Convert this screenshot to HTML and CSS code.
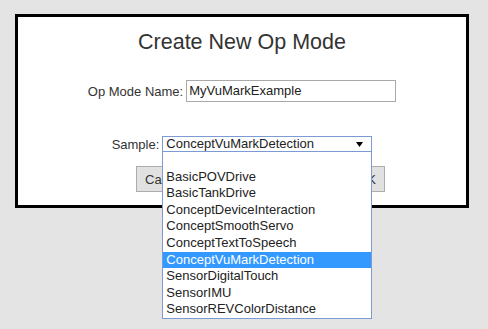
FILE: index.html
```html
<!DOCTYPE html>
<html lang="en">
<head>
  <meta charset="UTF-8">
  <title>Create New Op Mode</title>
  <link rel="stylesheet" href="styles.css">
</head>
<body>

<!-- New op mode dialog -->
<div class="dialog">
  <h1 class="title">Create New Op Mode</h1>

  <div class="row name-row">
    <label class="label">Op Mode Name:</label>
    <div class="input">MyVuMarkExample</div>
  </div>

  <div class="row sample-row">
    <label class="label">Sample:</label>
    <div class="select">
      <span class="select-text">ConceptVuMarkDetection</span>
      <svg class="arrow" width="7" height="5" viewBox="0 0 7 5"><polygon points="0,0 7,0 3.5,5" fill="#000"/></svg>

      <!-- open dropdown -->
      <ul class="options">
        <li></li>
        <li>BasicPOVDrive</li>
        <li>BasicTankDrive</li>
        <li>ConceptDeviceInteraction</li>
        <li>ConceptSmoothServo</li>
        <li>ConceptTextToSpeech</li>
        <li class="selected">ConceptVuMarkDetection</li>
        <li>SensorDigitalTouch</li>
        <li>SensorIMU</li>
        <li>SensorREVColorDistance</li>
      </ul>
    </div>
  </div>

  <div class="buttons">
    <button class="btn">Cancel</button>
    <button class="btn">OK</button>
  </div>
</div>

</body>
</html>
```

FILE: styles.css
```css
html {
  height: 100%;
}

body {
  margin: 0;
  min-height: 100%;
  padding-top: 14px;
  box-sizing: border-box;
  background: #e4e4e4;
  font-family: "Liberation Sans", Arial, sans-serif;
  color: #333;
}

.dialog {
  box-sizing: border-box;
  width: 454px;
  height: 194px;
  margin-left: 15px;
  padding-top: 13px;
  background: #fff;
  border: 3px solid #000;
}

.title {
  margin: 0;
  font-size: 21.5px;
  font-weight: normal;
  line-height: 24px;
  text-align: center;
  color: #333;
}

.row {
  display: flex;
  justify-content: center;
  align-items: center;
  font-size: 13px;
}

.name-row {
  margin-top: 26px;
  height: 22px;
  gap: 3px;
}

.sample-row {
  margin-top: 34px;
  height: 16px;
  gap: 3px;
}

.input {
  box-sizing: border-box;
  width: 210px;
  height: 22px;
  padding: 0 2px;
  line-height: 20px;
  border: 1px solid #a9a9a9;
  color: #222;
}

.select {
  position: relative;
  box-sizing: border-box;
  display: flex;
  align-items: center;
  width: 210px;
  height: 16px;
  padding-left: 3px;
  border: 1px solid #7a9cd3;
  line-height: 14px;
  color: #222;
}

.arrow {
  margin-left: auto;
  margin-right: 8px;
}

.options {
  position: absolute;
  top: 100%;
  left: -1px;
  z-index: 10;
  box-sizing: border-box;
  width: 210px;
  margin: 0;
  padding: 0;
  list-style: none;
  background: #fff;
  border: 1px solid #7a9cd3;
}

.options li {
  height: 16.6px;
  padding-left: 3px;
  line-height: 16.6px;
  white-space: nowrap;
  color: #222;
}

.options li.selected {
  background: #3399ff;
  color: #fff;
}

.buttons {
  display: flex;
  justify-content: space-between;
  margin-top: 14px;
  padding: 0 81px 0 118px;
}

.btn {
  height: 26px;
  padding: 0 8px;
  font-family: inherit;
  font-size: 13px;
  color: #333;
  background: #e1e1e1;
  border: 1px solid #adadad;
}
```
